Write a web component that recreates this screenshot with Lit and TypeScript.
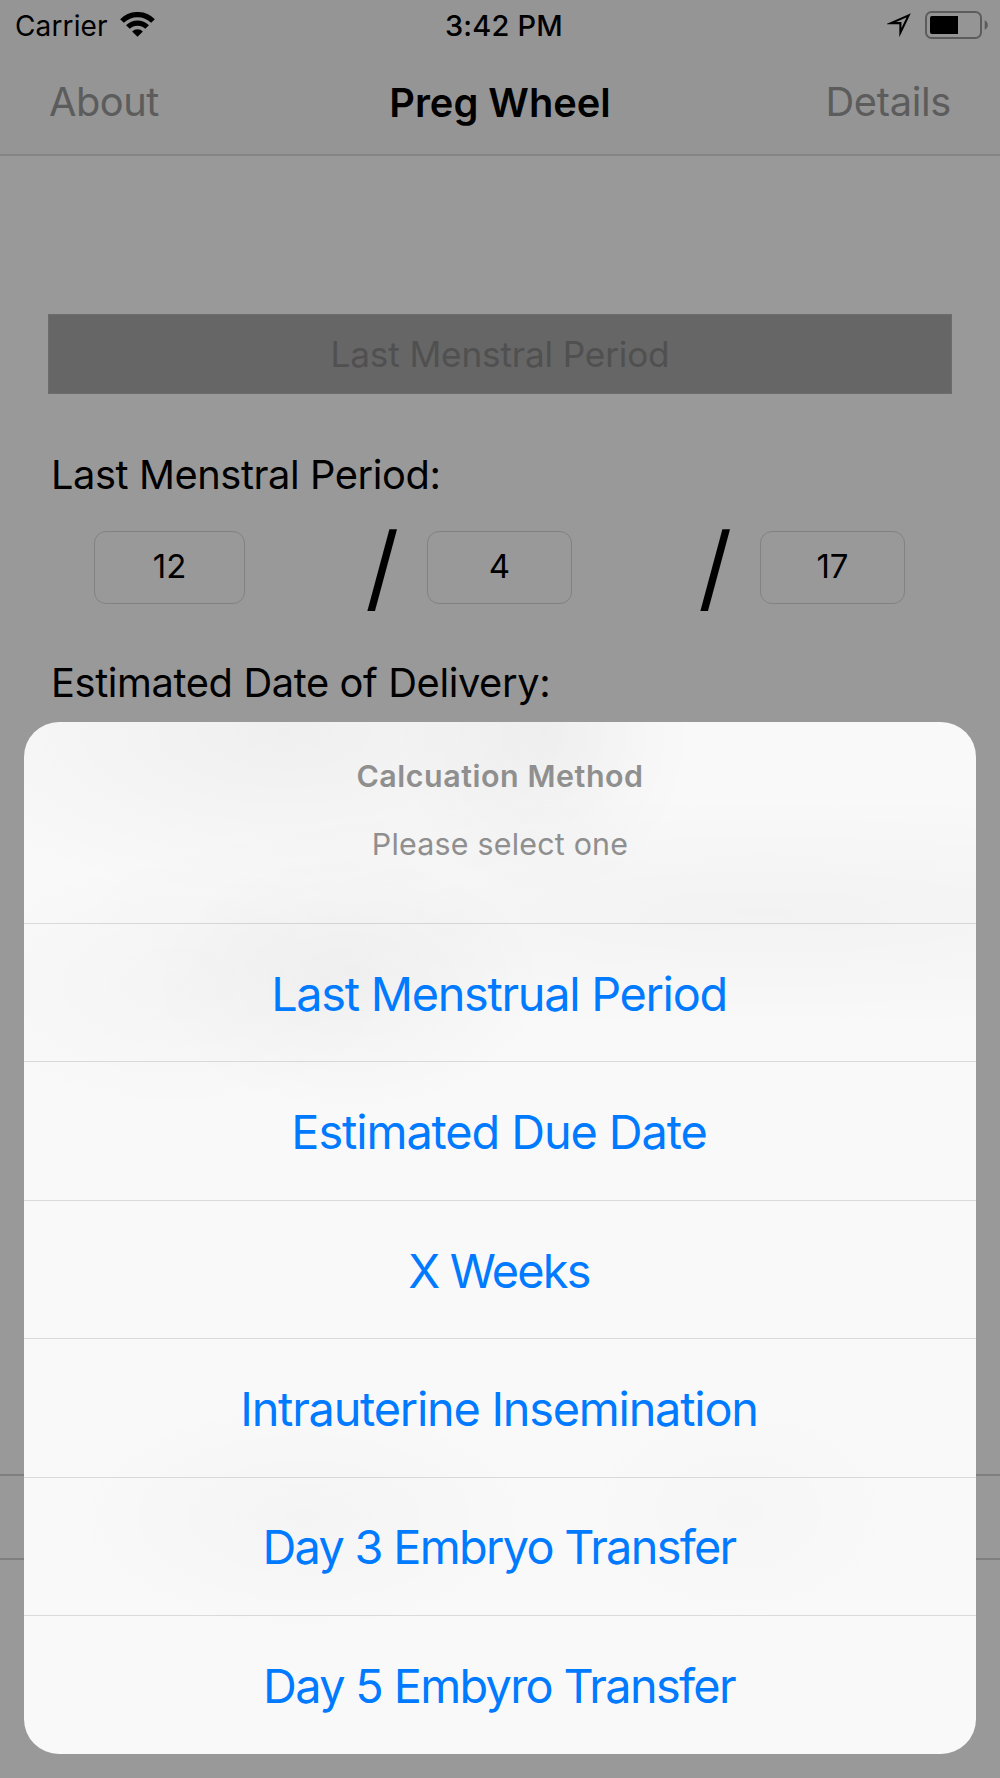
import { LitElement, html, css } from "lit";
import { customElement, property } from "lit/decorators.js";

@customElement("status-bar")
class StatusBar extends LitElement {
  static styles = css`
    :host { display: grid; grid-template-columns: 1fr auto 1fr; align-items: center; height: 51px; padding: 0 12px 0 15px; box-sizing: border-box; color: #000; }
    .left { display: flex; align-items: center; gap: 12px; font-size: 28px; letter-spacing: 0.13px; }
    .time { font-size: 29px; font-weight: 500; letter-spacing: 0.2px; padding-left: 5px; }
    .right { display: flex; justify-content: flex-end; align-items: center; gap: 14px; }
    svg { display: block; }
    .wifi { margin-top: -3px; }
    .arrow { margin-top: -1px; }
    .battery { margin-top: -2px; }
  `;
  render() {
    return html`
      <div class="left">
        <span>Carrier</span>
        <svg class="wifi" width="35" height="25" viewBox="0 0 35 25">
          <path d="M2 9a21.9 21.9 0 0 1 31 0M7.9 15a13.6 13.6 0 0 1 19.2 0" fill="none" stroke="#000" stroke-width="5.2"/>
          <path d="M17.5 24.8l-5.4-5.3a7.5 7.5 0 0 1 10.8 0z"/>
        </svg>
      </div>
      <div class="time">3:42 PM</div>
      <div class="right">
        <svg class="arrow" width="24" height="24" viewBox="0 0 24 24">
          <path d="M21.6 2.4L4.2 10.1H13.4V19.6Z" fill="none" stroke="#000" stroke-width="2.1" stroke-miterlimit="8"/>
        </svg>
        <svg class="battery" width="63" height="28" viewBox="0 0 63 28">
          <rect x="1" y="1" width="55" height="26" rx="5.5" fill="none" stroke="#5c5c5c" stroke-width="2"/>
          <path d="M7 5H33V23H7a2 2 0 0 1-2-2V7a2 2 0 0 1 2-2z"/>
          <path d="M59.7 9.2c1.8.7 3.1 2.6 3.1 4.8s-1.3 4.1-3.1 4.8z" fill="#5c5c5c"/>
        </svg>
      </div>`;
  }
}

@customElement("nav-bar")
class NavBar extends LitElement {
  static styles = css`
    :host { display: grid; grid-template-columns: 1fr auto 1fr; align-items: center; height: 103px; padding: 0 49px; color: #5c5c5c; font-size: 39.8px; }
    .about { letter-spacing: -0.5px; padding-bottom: 2px; }
    .title { color: #000; font-weight: 600; }
    .details { justify-self: end; letter-spacing: -0.32px; padding-bottom: 2px; }
  `;
  render() {
    return html`<span class="about">About</span><span class="title">Preg Wheel</span><span class="details">Details</span>`;
  }
}

@customElement("date-row")
class DateRow extends LitElement {
  @property({ attribute: false }) parts: string[] = [];
  static styles = css`
    :host { display: grid; grid-template-columns: 151px 182px 145px 188px 145px; align-items: center; height: 73px; }
    .field { box-sizing: border-box; height: 73px; border: 1px solid #828282; border-radius: 12px; display: flex; align-items: center; justify-content: center; font-size: 33px; padding-bottom: 3px; }
    .slash { justify-self: end; padding-right: 28px; font-size: 94px; line-height: 73px; }
  `;
  render() {
    return this.parts.map((p, i) => html`${i ? html`<span class="slash">/</span>` : null}<span class="field">${p}</span>`);
  }
}

@customElement("action-sheet")
class ActionSheet extends LitElement {
  @property() heading = "";
  @property() message = "";
  @property({ attribute: false }) actions: { label: string; spacing: number }[] = [];
  static styles = css`
    :host {
      display: flex; flex-direction: column; overflow: hidden; border-radius: 35px;
      background:
        radial-gradient(ellipse 200px 130px at 325px 262px, rgba(0,0,0,.032), transparent),
        radial-gradient(ellipse 230px 130px at 150px 262px, rgba(0,0,0,.018), transparent),
        radial-gradient(ellipse 380px 170px at 260px 10px, rgba(0,0,0,.038), transparent),
        radial-gradient(ellipse 150px 170px at 520px 10px, rgba(0,0,0,.03), transparent),
        radial-gradient(ellipse 720px 120px at 740px 190px, rgba(0,0,0,.028), transparent),
        radial-gradient(ellipse 240px 120px at 280px 795px, rgba(0,0,0,.02), transparent),
        radial-gradient(ellipse 170px 120px at 715px 790px, rgba(0,0,0,.012), transparent),
        #f9f9f9;
    }
    .head { box-sizing: border-box; height: 201px; padding-top: 34px; text-align: center; color: #8f8f8f; font-size: 30.4px; line-height: 40px; flex: none; }
    .heading { font-weight: 600; letter-spacing: 0.55px; }
    .message { margin-top: 28px; letter-spacing: 0.22px; }
    .action { flex: 1; display: flex; align-items: center; justify-content: center; border-top: 1px solid rgba(0,0,0,.12); color: #007aff; font-size: 46.8px; padding: 2px 2px 0 0; }
  `;
  render() {
    return html`
      <div class="head">
        <div class="heading">${this.heading}</div>
        <div class="message">${this.message}</div>
      </div>
      ${this.actions.map(a => html`<div class="action" style="letter-spacing:${a.spacing}px">${a.label}</div>`)}`;
  }
}

@customElement("app-root")
class AppRoot extends LitElement {
  static styles = css`
    :host { display: block; position: relative; width: 1000px; height: 1778px; overflow: hidden; background: #999; color: #000; font-family: Inter, "Liberation Sans", sans-serif; }
    .screen { display: flex; flex-direction: column; height: 100%; }
    .header { background: #959595; border-bottom: 2px solid #858585; }
    .content { flex: 1; display: flex; flex-direction: column; padding: 158px 48px 0 48px; }
    .picker { height: 80px; box-sizing: border-box; background: #666; border: 1px solid #6d6d6d; color: #505050; font-size: 35.2px; letter-spacing: -0.15px; display: flex; align-items: center; justify-content: center; }
    .label { font-size: 39.8px; line-height: 50px; padding-left: 3px; }
    .lmp { margin-top: 56px; letter-spacing: -0.42px; }
    .edd { margin-top: 54px; letter-spacing: -0.38px; }
    .dates { margin: 31px 0 0 46px; }
    .toolbar { height: 82px; border: solid #7f7f7f; border-width: 2px 0; margin-bottom: 218px; }
    .sheet { position: absolute; left: 24px; top: 722px; width: 952px; height: 1031.5px; }
  `;
  render() {
    return html`
      <div class="screen">
        <div class="header"><status-bar></status-bar><nav-bar></nav-bar></div>
        <div class="content">
          <div class="picker">Last Menstral Period</div>
          <div class="label lmp">Last Menstral Period:</div>
          <date-row class="dates" .parts=${["12", "4", "17"]}></date-row>
          <div class="label edd">Estimated Date of Delivery:</div>
        </div>
        <div class="toolbar"></div>
      </div>
      <action-sheet class="sheet" heading="Calcuation Method" message="Please select one"
        .actions=${[
          { label: "Last Menstrual Period", spacing: -1.28 },
          { label: "Estimated Due Date", spacing: -1.08 },
          { label: "X Weeks", spacing: -1.75 },
          { label: "Intrauterine Insemination", spacing: -1.22 },
          { label: "Day 3 Embryo Transfer", spacing: -1.68 },
          { label: "Day 5 Embyro Transfer", spacing: -1.64 },
        ]}></action-sheet>`;
  }
}
